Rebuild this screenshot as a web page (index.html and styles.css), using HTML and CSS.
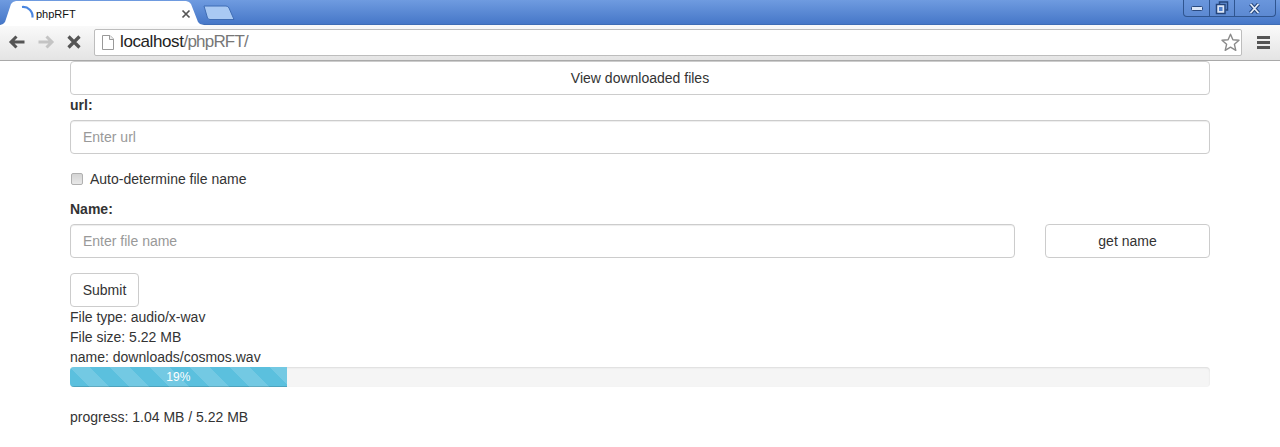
FILE: index.html
```html
<!DOCTYPE html>
<html lang="en">
<head>
<meta charset="utf-8">
<title>phpRFT</title>
<link rel="stylesheet" href="styles.css">
</head>
<body>
<header class="browser">
  <div class="tabstrip">
    <div class="tab">
      <svg class="spinner" width="16" height="16" viewBox="0 0 16 16"><path d="M3 3A9.500 9.500 0 0 1 13.500 13.500" fill="none" stroke="#4a86e0" stroke-width="2.200"/></svg>
      <span class="tab-title">phpRFT</span>
      <svg class="tab-close" width="10" height="10" viewBox="0 0 10 10"><path d="M1.500 1.500l7 7M8.500 1.500l-7 7" stroke="#555" stroke-width="1.700"/></svg>
    </div>
    <svg class="newtab" width="32" height="16" viewBox="0 0 32 16"><path d="M1 1H23Q25 1 26 3L31 14.500H7Q5.500 14.500 4.500 13Z" fill="#a9c9f3" stroke="#3f6db5"/></svg>
    <div class="winctl">
      <span class="winbtn min"><svg width="14" height="10" viewBox="0 0 14 10"><rect x="1.500" y="3.500" width="11" height="4" rx="1" fill="#dbe6f7" stroke="#2a4a80"/></svg></span>
      <span class="winbtn max"><svg width="14" height="14" viewBox="0 0 14 14"><path d="M4.500 3V1h8v8h-2" fill="none" stroke="#24457c" stroke-width="1.500"/><rect x="1.500" y="3.500" width="8.500" height="9" fill="#dbe6f7" stroke="#24457c" stroke-width="1.500"/><rect x="4" y="6" width="3.500" height="4" fill="#4f7fcc"/></svg></span>
      <span class="winbtn close"><svg width="14" height="11" viewBox="0 0 14 11"><path d="M2.500 1l8 9M10.500 1l-8 9" stroke="#24457c" stroke-width="3.800"/><path d="M2.500 1l8 9M10.500 1l-8 9" stroke="#e4ecf8" stroke-width="1.800"/></svg></span>
    </div>
  </div>
  <div class="toolbar">
    <svg class="navicon" width="18" height="14" viewBox="0 0 18 14"><path d="M16.500 7H4M8.500 1.500L3 7l5.500 5.500" fill="none" stroke="#555" stroke-width="3"/></svg>
    <svg class="navicon fwd" width="18" height="14" viewBox="0 0 18 14"><path d="M1.500 7H14M9.500 1.500L15 7l-5.500 5.500" fill="none" stroke="#c4c4c4" stroke-width="3"/></svg>
    <svg class="navicon stop" width="14" height="14" viewBox="0 0 14 14"><path d="M1.500 1.500l11 11M12.500 1.500l-11 11" stroke="#555" stroke-width="3.200"/></svg>
    <div class="omnibox">
      <svg class="pageicon" width="12" height="15" viewBox="0 0 12 15"><path d="M.5.500H8L11.500 4V14.500H.5Z" fill="#fff" stroke="#999"/><path d="M7.500.500V4.500H11.500" fill="#eee" stroke="#999"/></svg>
      <span class="host">localhost</span><span class="path">/phpRFT/</span>
      <svg class="star" width="19" height="19" viewBox="0 0 19 19"><path d="M9.500 1.200l2.400 5.600 6.100.5-4.600 4 1.400 6-5.300-3.200-5.300 3.200 1.400-6-4.600-4 6.100-.5Z" fill="#fff" stroke="#8a8a8a" stroke-width="1.400" stroke-linejoin="round"/></svg>
    </div>
    <div class="menu"><i></i><i></i><i></i></div>
  </div>
</header>
<main class="page">
  <button class="btn block" type="button">View downloaded files</button>
  <label class="field-label url-label" for="url">url:</label>
  <input class="input" id="url" type="text" placeholder="Enter url">
  <label class="check"><input type="checkbox"><span>Auto-determine file name</span></label>
  <label class="field-label" for="name">Name:</label>
  <div class="name-row">
    <input class="input" id="name" type="text" placeholder="Enter file name">
    <button class="btn getname" type="button">get name</button>
  </div>
  <button class="btn submit" type="button">Submit</button>
  <div class="info">File type: audio/x-wav</div>
  <div class="info">File size: 5.22 MB</div>
  <div class="info">name: downloads/cosmos.wav</div>
  <div class="progress"><div class="bar" style="width:19%">19%</div></div>
  <div class="info status">progress: 1.04 MB / 5.22 MB</div>
</main>
</body>
</html>
```
FILE: styles.css
```css
* { box-sizing: border-box; }
html, body { margin: 0; padding: 0; }
body {
  background: #fff;
  color: #333;
  font-family: "Liberation Sans", Arial, sans-serif;
  font-size: 14px;
  line-height: 20px;
  height: 447px;
  overflow: hidden;
}
.browser { height: 61px; display: flex; flex-direction: column; }
.tabstrip {
  height: 25px;
  background: linear-gradient(#6f9be0, #4677c8);
  border-bottom: 1px solid #3f6db5;
  display: flex;
  align-items: flex-start;
}
.tab {
  width: 204px;
  height: 25px;
  margin-top: 1px;
  background: #fff;
  clip-path: polygon(0 24px, 3px 23px, 5px 21px, 11px 3px, 13px 1px, 16px 0, 186px 0, 189px 1px, 191px 3px, 198px 21px, 200px 23px, 204px 24px, 204px 25px, 0 25px);
  display: flex;
  align-items: center;
  padding: 0 13px 0 19px;
  color: #111;
  font-size: 11px;
}
.spinner { flex: none; margin-top: -4px; }
.tab-title { margin-left: 1px; flex: 1; }
.tab-close { flex: none; margin-top: 1px; }
.newtab { margin: 5px 0 0 -1px; flex: none; }
.winctl {
  margin-left: auto;
  margin-right: 4px;
  width: 93px;
  height: 17px;
  display: flex;
  border: 1px solid #2f5590;
  border-top: 0;
  border-radius: 0 0 4px 4px;
  background: linear-gradient(#6a96dc, #5c89d2);
}
.winbtn { display: flex; align-items: center; justify-content: center; border-left: 1px solid #2f5590; }
.winbtn.min { width: 25px; border-left: 0; }
.winbtn.max { width: 25px; }
.winbtn.close { flex: 1; }
.toolbar {
  height: 36px;
  background: linear-gradient(#fafafa, #e4e4e4);
  border-bottom: 1px solid #a9a9a9;
  display: flex;
  align-items: center;
  padding: 0 0 1px 8px;
}
.navicon { flex: none; }
.navicon.fwd { margin-left: 11px; }
.navicon.stop { margin-left: 12px; }
.omnibox {
  margin-left: 13px;
  width: 1148px;
  height: 27px;
  background: #fff;
  border: 1px solid #bdbdbd;
  border-radius: 2px;
  display: flex;
  align-items: center;
  padding-left: 7px;
  font-size: 17px;
  letter-spacing: -0.4px;
}
.pageicon { flex: none; margin-right: 6px; }
.host { color: #222; }
.path { color: #777; letter-spacing: -0.8px; }
.star { margin-left: auto; margin-right: 1px; flex: none; }
.menu { margin-left: 15px; width: 13px; display: flex; flex-direction: column; gap: 2px; }
.menu i { display: block; height: 3px; background: #555; }
.page { padding: 0 70px; }
.btn {
  display: block;
  height: 34px;
  background: #fff;
  color: #333;
  border: 1px solid #ccc;
  border-radius: 4px;
  font: 14px/20px "Liberation Sans", Arial, sans-serif;
  padding: 6px 12px;
  text-align: center;
}
.block { width: 100%; }
.field-label { display: block; font-weight: 700; margin-bottom: 5px; }
.input {
  display: block;
  width: 100%;
  height: 34px;
  padding: 6px 12px;
  color: #555;
  background: #fff;
  border: 1px solid #ccc;
  border-radius: 4px;
  font: 14px/20px "Liberation Sans", Arial, sans-serif;
  box-shadow: inset 0 1px 1px rgba(0, 0, 0, .075);
}
.input::placeholder { color: #999; opacity: 1; }
.check { display: flex; align-items: center; height: 20px; margin: 15px 0 10px; }
.check input {
  appearance: none;
  width: 12px;
  height: 12px;
  margin: 0 7px 0 1px;
  background: linear-gradient(#d4d4d4, #e8e8e8);
  border: 1px solid #b0b0b0;
  border-radius: 2px;
}
.name-row { display: flex; gap: 30px; }
.name-row .input { flex: 1; min-width: 0; }
.getname { width: 165px; flex: none; }
.submit { margin-top: 15px; width: 69px; padding: 6px 0; }
.progress {
  height: 20px;
  background: #f5f5f5;
  border-radius: 4px;
  overflow: hidden;
  box-shadow: inset 0 1px 2px rgba(0, 0, 0, .1);
}
.bar {
  height: 100%;
  color: #fff;
  font-size: 12px;
  line-height: 20px;
  text-align: center;
  background-color: #5bc0de;
  background-image: linear-gradient(45deg, rgba(255,255,255,.15) 25%, transparent 25%, transparent 50%, rgba(255,255,255,.15) 50%, rgba(255,255,255,.15) 75%, transparent 75%, transparent);
  background-size: 40px 40px;
  box-shadow: inset 0 -1px 0 rgba(0, 0, 0, .15);
}
.status { margin-top: 20px; }
```
